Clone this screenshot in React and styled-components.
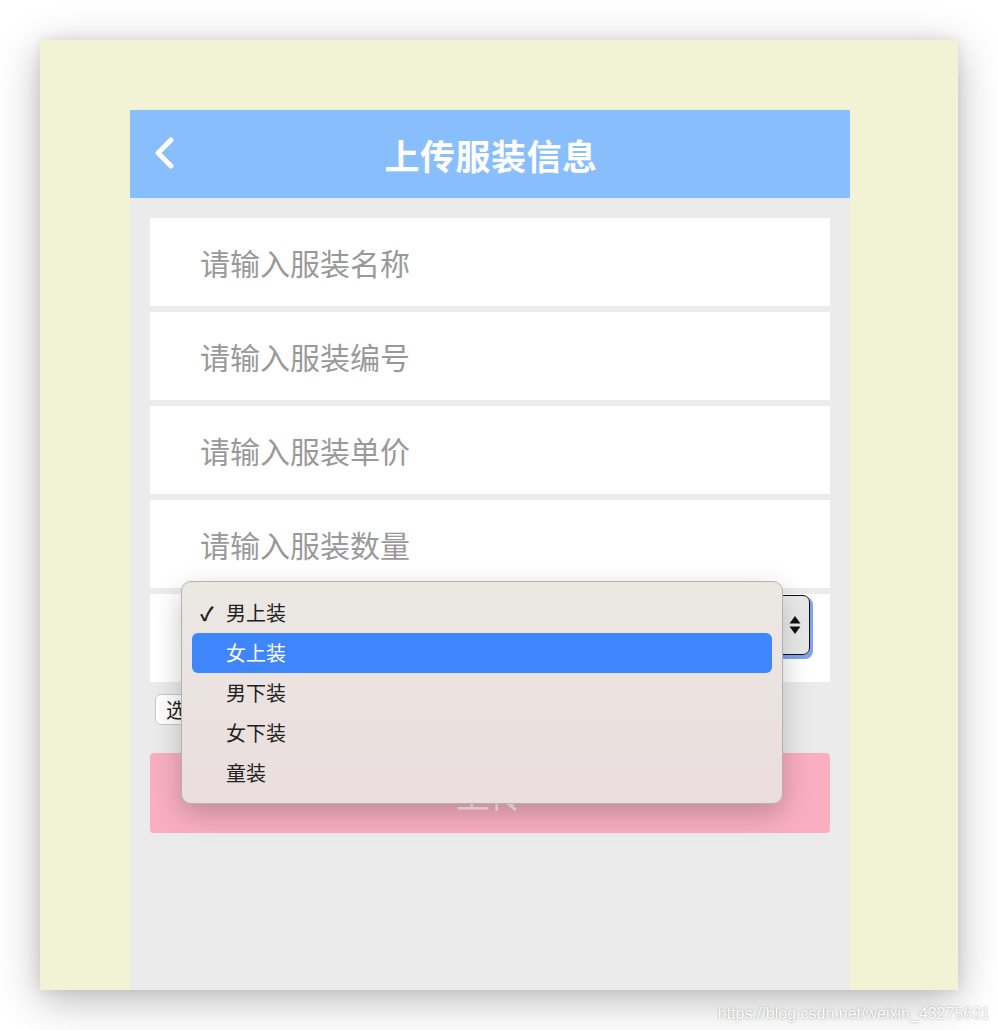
import React from 'react'
import styled, { createGlobalStyle } from 'styled-components'

// #region Styles
const GlobalStyle = createGlobalStyle`
  html, body {
    margin: 0;
    padding: 0;
    background: #ffffff;
    font-family: 'Noto Sans CJK SC', 'Noto Sans', sans-serif;
  }
`
const Page = styled.div`
  position: relative;
  width: 998px;
  height: 1030px;
  padding: 40px 40px 0 40px;
  box-sizing: border-box;
  overflow: hidden;
`
const Window = styled.div`
  width: 918px;
  height: 950px;
  padding: 70px 0 0 90px;
  box-sizing: border-box;
  background: #f2f3d5;
  box-shadow: 0 10px 40px rgba(0, 0, 0, 0.28), 0 0 12px rgba(0, 0, 0, 0.08);
`
const Phone = styled.div`
  position: relative;
  display: flex;
  flex-direction: column;
  width: 720px;
  height: 880px;
  background: #ebebeb;
`
const Header = styled.header`
  display: flex;
  align-items: center;
  justify-content: center;
  position: relative;
  height: 88px;
  background: #88befc;
  color: #ffffff;
`
const Back = styled.svg`
  position: absolute;
  left: 22px;
  top: 26px;
  width: 26px;
  height: 34px;
`
const Title = styled.h1`
  margin: 0 0 0 2px;
  font-size: 35px;
  font-weight: bold;
  letter-spacing: 0.5px;
`
const Form = styled.div`
  display: flex;
  flex-direction: column;
  gap: 6px;
  padding: 20px 20px 0;
`
const Field = styled.div`
  display: flex;
  align-items: center;
  height: 88px;
  padding-left: 50px;
  background: #ffffff;
  font-size: 30px;
  color: #999999;
`
const SelectRow = styled.div`
  display: flex;
  justify-content: flex-end;
  align-items: flex-start;
  height: 88px;
  padding: 1px 20px 0 60px;
  box-sizing: border-box;
  background: #ffffff;
`
const SelectBox = styled.div`
  display: flex;
  justify-content: flex-end;
  align-items: center;
  width: 100%;
  height: 60px;
  padding-right: 8px;
  box-sizing: border-box;
  border: 1.5px solid #111;
  border-radius: 7px;
  background: linear-gradient(to right, #ffffff 85%, #e6e6e6);
  box-shadow: 2px 3px 0 1px #7fa3ee;
`
const Arrows = styled.svg`
  width: 12px;
  height: 20px;
`
const FileButton = styled.button`
  align-self: flex-start;
  height: 31px;
  margin: 6px 0 0 5px;
  padding: 0 10px;
  border: 1px solid #c9c9c9;
  border-radius: 6px;
  background: #ffffff;
  font-family: inherit;
  font-size: 20px;
  color: #222;
`
const Upload = styled.button`
  height: 80px;
  margin-top: 22px;
  border: none;
  border-radius: 4px;
  background: #f9afc0;
  font-family: inherit;
  font-size: 34px;
  color: rgba(255, 255, 255, 0.75);
`
const Popup = styled.ul`
  position: absolute;
  left: 51px;
  top: 471px;
  width: 602px;
  margin: 0;
  padding: 11px 10px 10px;
  box-sizing: border-box;
  list-style: none;
  border: 1px solid #b5b1ac;
  border-radius: 10px;
  background: linear-gradient(to bottom, #ebe8e2, #eadede);
  box-shadow: 0 10px 28px rgba(0, 0, 0, 0.22);
`
const Option = styled.li`
  position: relative;
  height: 40px;
  line-height: 40px;
  padding-left: 34px;
  border-radius: 6px;
  font-size: 20px;
  color: ${p => (p.active ? '#ffffff' : '#222222')};
  background: ${p => (p.active ? '#3f86fd' : 'transparent')};
`
const Check = styled.span`
  position: absolute;
  left: 8px;
  top: 0;
  font-size: 19px;
  font-weight: bold;
`
const Watermark = styled.div`
  position: absolute;
  right: 8px;
  bottom: 7px;
  font-family: 'Liberation Sans', Arial, sans-serif;
  font-size: 16px;
  color: #ffffff;
  text-shadow: 0 0 2px rgba(0, 0, 0, 0.4);
`
// #endregion

const options = ['男上装', '女上装', '男下装', '女下装', '童装']
const placeholders = ['请输入服装名称', '请输入服装编号', '请输入服装单价', '请输入服装数量']

const App = () => (
  <Page>
    <GlobalStyle />
    <Window>
      <Phone>
        <Header>
          <Back viewBox="0 0 26 34">
            <path d="M19 4 L6 17 L19 30" fill="none" stroke="#fff" strokeWidth="5" strokeLinecap="round" strokeLinejoin="round" />
          </Back>
          <Title>上传服装信息</Title>
        </Header>

        <Form>
          {placeholders.map(text => (
            <Field key={text}>{text}</Field>
          ))}
          <SelectRow>
            <SelectBox>
              <Arrows viewBox="0 0 12 20">
                <path d="M6 1 L11.5 8.5 L0.5 8.5 Z M6 19 L11.5 11.5 L0.5 11.5 Z" fill="#111" />
              </Arrows>
            </SelectBox>
          </SelectRow>
          <FileButton>选择文件</FileButton>
          <Upload>上传</Upload>
        </Form>

        <Popup>
          {options.map((name, i) => (
            <Option key={name} active={i === 1}>
              {i === 0 && <Check>✓</Check>}
              {name}
            </Option>
          ))}
        </Popup>
      </Phone>
    </Window>
    <Watermark>https://blog.csdn.net/weixin_43275631</Watermark>
  </Page>
)

export default App
